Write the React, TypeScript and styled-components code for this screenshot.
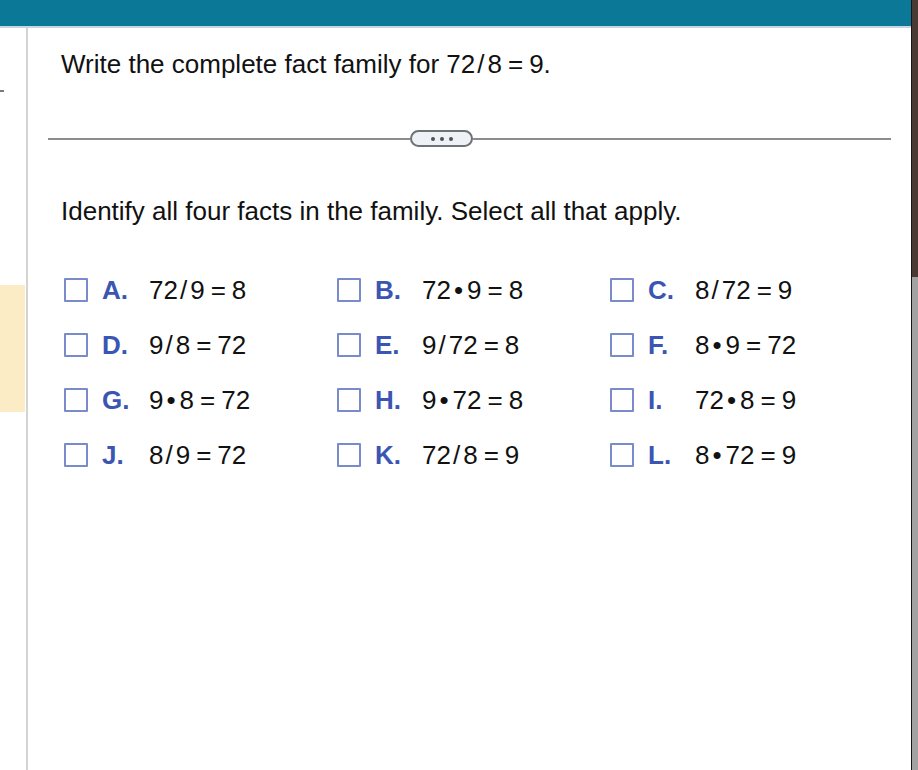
import React from 'react';
import styled, { createGlobalStyle } from 'styled-components';

const GlobalStyle = createGlobalStyle`
  html, body {
    margin: 0;
    padding: 0;
    background: #ffffff;
  }
  body {
    font-family: "Liberation Sans", Arial, sans-serif;
    color: #111;
  }
`;

const Page = styled.div`
  width: 918px;
  height: 770px;
  display: flex;
  overflow: hidden;
`;

const Main = styled.div`
  flex: 1;
  display: flex;
  flex-direction: column;
  min-width: 0;
`;

const TopBar = styled.div`
  height: 26px;
  background: #0b7898;
  border-bottom: 2px solid #c8d6e4;
  flex-shrink: 0;
`;

const Body = styled.div`
  flex: 1;
  display: flex;
`;

const LeftRail = styled.div`
  width: 26px;
  border-right: 2px solid #d3d3d3;
  display: flex;
  flex-direction: column;
  flex-shrink: 0;
`;

const RailDash = styled.div`
  margin-top: 62px;
  width: 4px;
  height: 2px;
  background: #7a7a7a;
`;

const RailHighlight = styled.div`
  margin-top: 193px;
  width: 25px;
  height: 127px;
  background: #fcecc6;
`;

const Content = styled.div`
  flex: 1;
  padding: 21px 20px 0 20px;
  display: flex;
  flex-direction: column;
`;

const Prompt = styled.div`
  font-size: 26px;
  line-height: 30px;
  padding-left: 13px;
  color: #111;
`;

const Divider = styled.div`
  margin-top: 51px;
  height: 17px;
  display: flex;
  align-items: center;
`;

const Rule = styled.div<{ $width?: number }>`
  flex: ${({ $width }) => ($width ? `0 0 ${$width}px` : '1')};
  height: 2px;
  background: #8c8c8c;
`;

const MoreButton = styled.button`
  width: 63px;
  height: 17px;
  box-sizing: border-box;
  border: 2px solid #6e7276;
  border-radius: 9px;
  background: #eef1f6;
  padding: 0;
  display: flex;
  align-items: center;
  justify-content: center;
  gap: 5px;
  flex-shrink: 0;
`;

const Dot = styled.span`
  width: 4px;
  height: 4px;
  border-radius: 50%;
  background: #4f5357;
`;

const Instruction = styled(Prompt)`
  margin-top: 49px;
`;

const Options = styled.div`
  margin-top: 52px;
  padding-left: 16px;
  display: grid;
  grid-template-columns: repeat(3, 273px);
  grid-auto-rows: 24px;
  row-gap: 31px;
`;

const Option = styled.label`
  display: flex;
  align-items: center;
  height: 24px;
  cursor: pointer;
`;

const Box = styled.span`
  width: 24px;
  height: 24px;
  box-sizing: border-box;
  border: 2px solid #7a8bcb;
  border-radius: 1px;
  background: #fff;
  flex-shrink: 0;
`;

const Letter = styled.span`
  margin-left: 14px;
  width: 47px;
  font-size: 26px;
  line-height: 30px;
  font-weight: bold;
  color: #3b55b2;
`;

const Math = styled.span`
  font-size: 26px;
  line-height: 30px;
  color: #111;
  white-space: nowrap;
`;

const Op = styled.span<{ $left: number; $right: number }>`
  margin-left: ${({ $left }) => $left}px;
  margin-right: ${({ $right }) => $right}px;
`;

const ScrollStrip = styled.div`
  width: 6px;
  border-left: 1px solid #1c1414;
  display: flex;
  flex-direction: column;
  flex-shrink: 0;
`;

const StripTop = styled.div`
  height: 277px;
  background: #4a3a34;
`;

const StripRest = styled.div`
  flex: 1;
  background: #a2a2a2;
`;

type Fact = { letter: string; parts: string[] };

const facts: Fact[] = [
  { letter: 'A.', parts: ['72', '/', '9', '=', '8'] },
  { letter: 'B.', parts: ['72', '•', '9', '=', '8'] },
  { letter: 'C.', parts: ['8', '/', '72', '=', '9'] },
  { letter: 'D.', parts: ['9', '/', '8', '=', '72'] },
  { letter: 'E.', parts: ['9', '/', '72', '=', '8'] },
  { letter: 'F.', parts: ['8', '•', '9', '=', '72'] },
  { letter: 'G.', parts: ['9', '•', '8', '=', '72'] },
  { letter: 'H.', parts: ['9', '•', '72', '=', '8'] },
  { letter: 'I.', parts: ['72', '•', '8', '=', '9'] },
  { letter: 'J.', parts: ['8', '/', '9', '=', '72'] },
  { letter: 'K.', parts: ['72', '/', '8', '=', '9'] },
  { letter: 'L.', parts: ['8', '•', '72', '=', '9'] },
];

// spacing (left, right) around each operator, in px
const opSpacing: { [op: string]: [number, number] } = {
  '/': [2, 3],
  '•': [3, 4],
  '=': [6, 6],
};

const Expression: React.FC<{ parts: string[] }> = ({ parts }) => (
  <>
    {parts.map((p, i) =>
      opSpacing[p] ? (
        <Op key={i} $left={opSpacing[p][0]} $right={opSpacing[p][1]}>
          {p}
        </Op>
      ) : (
        <span key={i}>{p}</span>
      )
    )}
  </>
);

const App: React.FC = () => {
  return (
    <>
      <GlobalStyle />
      <Page>
        <Main>
          <TopBar />
          <Body>
            <LeftRail>
              <RailDash />
              <RailHighlight />
            </LeftRail>
            <Content>
              <Prompt>
                Write the complete fact family for <Expression parts={['72', '/', '8', '=', '9']} />.
              </Prompt>
              <Divider>
                <Rule $width={362} />
                <MoreButton aria-label="more">
                  <Dot />
                  <Dot />
                  <Dot />
                </MoreButton>
                <Rule />
              </Divider>
              <Instruction>Identify all four facts in the family. Select all that apply.</Instruction>
              <Options>
                {facts.map(f => (
                  <Option key={f.letter}>
                    <Box />
                    <Letter>{f.letter}</Letter>
                    <Math>
                      <Expression parts={f.parts} />
                    </Math>
                  </Option>
                ))}
              </Options>
            </Content>
          </Body>
        </Main>
        <ScrollStrip>
          <StripTop />
          <StripRest />
        </ScrollStrip>
      </Page>
    </>
  );
};

export default App;
